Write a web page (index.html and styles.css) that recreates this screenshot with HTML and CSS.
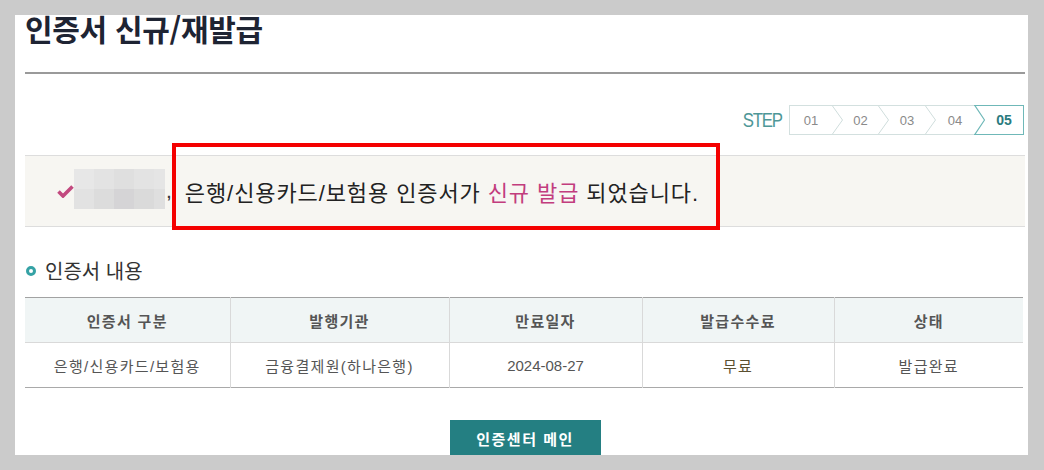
FILE: index.html
```html
<!DOCTYPE html>
<html lang="ko">
<head>
<meta charset="utf-8">
<title>인증서 신규/재발급</title>
<link rel="stylesheet" href="styles.css">
</head>
<body>
<div class="page">
  <h1 class="title">인증서 신규/재발급</h1>
  <hr class="rule">

  <div class="steps">
    <span class="steps-label">STEP</span>
    <div class="steps-box">
      <span class="step s1">01</span>
      <svg class="chev" width="11" height="28" viewBox="0 0 11 28"><polyline points="0.5,0 10.5,14 0.5,28" fill="none" stroke="#cfdddc" stroke-width="1"/></svg>
      <span class="step s2">02</span>
      <svg class="chev" width="11" height="28" viewBox="0 0 11 28"><polyline points="0.5,0 10.5,14 0.5,28" fill="none" stroke="#cfdddc" stroke-width="1"/></svg>
      <span class="step s3">03</span>
      <svg class="chev" width="11" height="28" viewBox="0 0 11 28"><polyline points="0.5,0 10.5,14 0.5,28" fill="none" stroke="#cfdddc" stroke-width="1"/></svg>
      <span class="step s4">04</span>
      <div class="step-active">
        <svg class="chev" width="11" height="28" viewBox="0 0 11 28"><polyline points="0.5,-1 10.5,14 0.5,29" fill="none" stroke="#6fb8b8" stroke-width="1.2"/></svg>
        <span class="step s5">05</span>
      </div>
    </div>
  </div>

  <div class="message">
    <svg class="check" width="17" height="13" viewBox="0 0 17 13"><path d="M1.5 6.5 L6 11 L15.5 1.5" fill="none" stroke="#c2497f" stroke-width="3.6" stroke-linejoin="miter"/></svg>
    <div class="blur">
      <span class="px a1"></span><span class="px a2"></span><span class="px a3"></span><span class="px a4"></span><span class="px a5"></span>
      <span class="px b1"></span><span class="px b2"></span><span class="px b3"></span><span class="px b4"></span><span class="px b5"></span>
    </div>
    <span class="comma">,</span>
    <p class="msg-text">은행/신용카드/보험용 인증서가 <em class="hl">신규 발급</em> 되었습니다.</p>
  </div>

  <h2 class="section-title"><span class="ring"></span>인증서 내용</h2>

  <table class="info">
    <colgroup>
      <col class="c1"><col class="c2"><col class="c3"><col class="c4"><col class="c5">
    </colgroup>
    <thead>
      <tr>
        <th>인증서 구분</th>
        <th>발행기관</th>
        <th>만료일자</th>
        <th>발급수수료</th>
        <th>상태</th>
      </tr>
    </thead>
    <tbody>
      <tr>
        <td>은행/신용카드/보험용</td>
        <td>금융결제원(하나은행)</td>
        <td class="date">2024-08-27</td>
        <td class="free">무료</td>
        <td>발급완료</td>
      </tr>
    </tbody>
  </table>

  <div class="actions">
    <a class="btn" href="#">인증센터 메인</a>
  </div>

  <div class="annot"></div>
</div>
</body>
</html>
```

FILE: styles.css
```css
html, body {
  margin: 0;
  padding: 0;
}
body {
  background: #cbcbcb;
  font-family: "Liberation Sans", "Noto Sans CJK KR", sans-serif;
  color: #222;
}
.page {
  position: relative;
  box-sizing: border-box;
  margin: 15px 0 0 15px;
  width: 1013px;
  height: 440px;
  background: #fff;
  padding: 0 3px 0 10px;
}
.title {
  margin: 0;
  font-family: "Noto Sans CJK KR", sans-serif;
  font-size: 30px;
  line-height: 26px;
  font-weight: 700;
  color: #1e2433;
  letter-spacing: -0.3px;
}
.rule {
  margin: 31px 0 0;
  border: 0;
  height: 2px;
  background: #9a9a9a;
}

/* steps */
.steps {
  margin-top: 31px;
  display: flex;
  justify-content: flex-end;
  align-items: center;
  padding-right: 1px;
}
.steps-label {
  display: inline-block;
  font-family: "Liberation Sans", sans-serif;
  font-size: 21px;
  letter-spacing: -1.5px;
  color: #4e9797;
  transform: scaleX(0.8);
  transform-origin: right center;
  margin-right: 7px;
  line-height: 30px;
}
.steps-box {
  display: flex;
  height: 28px;
  border: 1px solid #d3e0df;
  border-right: 0;
}
.step {
  display: flex;
  align-items: center;
  justify-content: center;
  font-family: "Liberation Sans", sans-serif;
  font-size: 13px;
  color: #8a8a8a;
}
.chev {
  display: block;
  flex: none;
}
.s1 { width: 42px; }
.s2 { width: 35px; }
.s3 { width: 36px; }
.s4 { width: 38px; }
.s5 {
  width: 38px;
  font-weight: 700;
  color: #2b7b7e;
  font-size: 14px;
}
.step-active {
  display: flex;
  margin: -1px 0;
  border: 1px solid #6fb8b8;
  border-left: 0;
}

/* message */
.message {
  margin-top: 20px;
  height: 70px;
  border-top: 1px solid #dddddd;
  border-bottom: 1px solid #dddddd;
  background: #f7f6f2;
  display: flex;
  align-items: center;
  padding-left: 32px;
}
.check {
  display: block;
  margin-top: 1px;
}
.blur {
  display: grid;
  grid-template-columns: 20px 20px 20px 20px 11px;
  grid-template-rows: 20px 20px;
  margin-top: -4px;
}
.px { display: block; }
.a1 { background: #e7e7e7; }
.a2 { background: #e3e3e3; }
.a3 { background: #dfdfdf; }
.a4 { background: #e3e3e3; }
.a5 { background: #e5e5e5; }
.b1 { background: #e2e2e2; }
.b2 { background: #dcdcdc; }
.b3 { background: #d5d4d6; }
.b4 { background: #dadada; }
.b5 { background: #dfdfdf; }
.comma {
  font-size: 21px;
  color: #333;
  margin-left: 1px;
}
.msg-text {
  margin: 0 0 0 13px;
  font-size: 22px;
  letter-spacing: 0.9px;
  color: #222;
}
.hl {
  font-style: normal;
  color: #c23d7e;
}

/* section */
.section-title {
  margin: 30px 0 0;
  display: flex;
  align-items: center;
  font-family: "Noto Sans CJK KR", sans-serif;
  font-size: 20px;
  font-weight: 400;
  line-height: 28px;
  color: #333;
}
.ring {
  box-sizing: border-box;
  width: 10px;
  height: 10px;
  border: 3px solid #35a2a5;
  border-radius: 50%;
  margin: 0 9px 0 1px;
}

/* table */
.info {
  margin-top: 12px;
  width: 998px;
  border-collapse: collapse;
  table-layout: fixed;
  border-top: 1px solid #a2a2a2;
  border-bottom: 1px solid #a9a9a9;
}
.c1 { width: 205px; }
.c2 { width: 219px; }
.c3 { width: 193px; }
.c4 { width: 192px; }
.c5 { width: 189px; }
.info th, .info td {
  height: 44px;
  padding: 0;
  text-align: center;
  font-size: 15px;
  letter-spacing: 1.3px;
  color: #555;
  border-left: 1px solid #d9d9d9;
}
.info th:first-child, .info td:first-child {
  border-left: 0;
}
.info th {
  background: #f0f5f5;
  font-weight: 700;
  border-bottom: 1px solid #d9d9d9;
}
.info td {
  font-weight: 400;
}
.info .date {
  letter-spacing: 0;
}
.info .free {
  color: #5b5030;
}

/* button */
.actions {
  margin-top: 32px;
  display: flex;
  justify-content: center;
}
.btn {
  display: flex;
  align-items: center;
  justify-content: center;
  width: 151px;
  height: 36px;
  background: #247f82;
  border-bottom: 4px solid #1d6466;
  color: #fff;
  font-size: 15px;
  font-weight: 700;
  letter-spacing: 1.5px;
  text-decoration: none;
}

/* annotation */
.annot {
  position: absolute;
  left: 157px;
  top: 128px;
  width: 548px;
  height: 87px;
  box-sizing: border-box;
  border: 4px solid #f40000;
}
```
